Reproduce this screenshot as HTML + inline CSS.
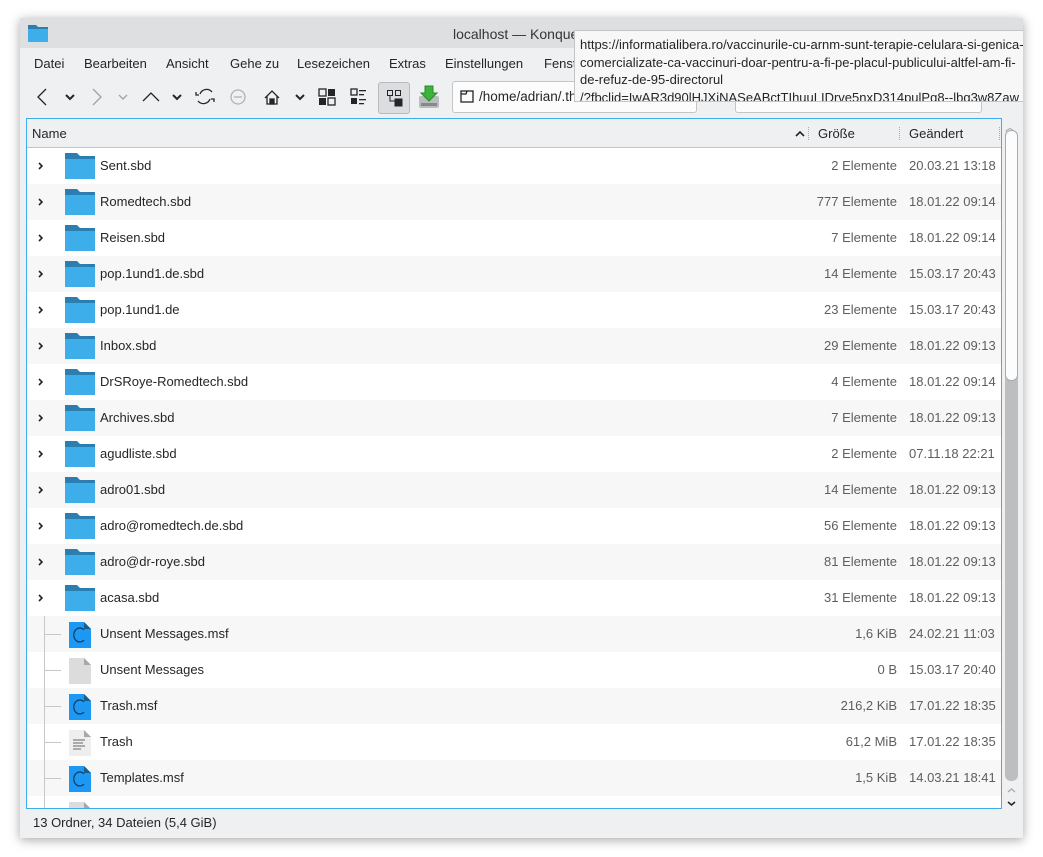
<!DOCTYPE html>
<html><head><meta charset="utf-8">
<style>
*{margin:0;padding:0;box-sizing:border-box}
body{width:1043px;height:857px;background:#fff;font-family:"Liberation Sans",sans-serif;font-size:13px;color:#232627;position:relative;overflow:hidden}
.win{position:absolute;left:20px;top:18px;width:1003px;height:820px;background:#eff0f1;box-shadow:0 2px 10px rgba(0,0,0,.35)}
.title{position:absolute;left:0;top:0;width:100%;height:30px;background:#dedfe0}
.a{position:absolute;white-space:nowrap}
.menu span{position:absolute;top:38px;font-size:13px}
.view{position:absolute;left:6px;top:100px;width:976px;height:691px;border:1px solid #3daee9;background:#fff;overflow:hidden}
.hdr{position:absolute;left:0;top:0;width:100%;height:29px;background:#eff0f1;border-bottom:1px solid #c4c5c6}
.row{position:absolute;left:0;width:974px;height:36px}
.row.g{background:#f7f7f7}
.nm{position:absolute;left:73px;top:10px}
.sz{position:absolute;right:104px;top:10px;color:#5c5e60;text-align:right}
.dt{position:absolute;left:882px;top:10px;color:#5c5e60}
.fold{position:absolute;left:38px;top:5px;width:30px;height:26px}
.tip{position:absolute;left:574px;top:30px;width:449px;height:72px;background:#f7f7f7;border:1px solid #c4c5c6;border-right:none;font-size:13px;line-height:17.5px;padding:5px 0 0 5px;overflow:hidden;white-space:nowrap}
</style></head><body>
<div class="win">
 <div class="title">
  <svg class="a" style="left:8px;top:7px" width="20" height="17"><path d="M0 0h8l2 2h10v15H0z" fill="#2a7fb0"/><rect x="0" y="4" width="20" height="13" fill="#3daee9"/></svg>
  <div class="a" style="left:433px;top:8px;font-size:14px;color:#31363b">localhost — Konqueror</div>
 </div>
 <div class="menu">
  <span style="left:14px">Datei</span><span style="left:64px">Bearbeiten</span><span style="left:146px">Ansicht</span><span style="left:210px">Gehe zu</span><span style="left:277px">Lesezeichen</span><span style="left:369px">Extras</span><span style="left:425px">Einstellungen</span><span style="left:524px">Fenster</span>
 </div>
 <svg class="a" style="left:0;top:62px" width="440" height="34" fill="none" stroke="#232627" stroke-width="1.3">
  <path d="M26 9l-8 8 8 8"/><path d="M46 15l4 4 4-4" stroke-width="2"/>
  <path d="M73 9l8 8-8 8" stroke="#a0a2a4"/><path d="M99 15l4 4 4-4" stroke="#a0a2a4"/>
  <path d="M123 21l8-8 8 8"/><path d="M153 15l4 4 4-4" stroke-width="2"/>
  <path d="M192 12a7 7 0 0 0-12 2M178 21a7 7 0 0 0 12-2"/><path d="M176 12v3h3M194 22v-3h-3"/>
  <circle cx="218" cy="17" r="7" stroke="#b0b2b4"/><path d="M214 17h8" stroke="#b0b2b4"/>
  <path d="M245 18l7-7 7 7M247 16v8h10v-8"/><rect x="250" y="19" width="4" height="5" fill="#232627"/>
  <path d="M276 15l4 4 4-4" stroke-width="2"/>
  <g stroke="none" fill="#232627"><rect x="299" y="9" width="7" height="7" fill="none" stroke="#232627"/><rect x="308" y="9" width="7" height="7"/><rect x="299" y="18" width="7" height="7"/><rect x="308" y="18" width="7" height="7" fill="none" stroke="#232627"/>
  <rect x="331" y="9" width="6" height="6" fill="none" stroke="#232627"/><rect x="331" y="18" width="6" height="6"/><rect x="339" y="10" width="7" height="1.3"/><rect x="339" y="14" width="5" height="1.3"/><rect x="339" y="19" width="7" height="1.3"/><rect x="339" y="23" width="5" height="1.3"/></g>
 </svg>
 <div class="a" style="left:358px;top:64px;width:32px;height:32px;background:#dcdde0;border:1px solid #b8babc;border-radius:3px"></div>
 <svg class="a" style="left:366px;top:71px" width="18" height="18" fill="none" stroke="#232627"><rect x="1.5" y="1.5" width="5" height="5"/><rect x="9.5" y="1.5" width="5" height="5"/><path d="M4 7v5h5"/><rect x="9" y="10" width="7" height="7" fill="#232627"/></svg>
 <svg class="a" style="left:398px;top:66px" width="22" height="26"><rect x="1" y="12" width="20" height="12" rx="2" fill="#b8bcbc"/><rect x="3" y="19" width="16" height="3" fill="#888"/><path d="M7 2h8v7h4l-8 8-8-8h4z" fill="#3cb43c" stroke="#2a8a2a"/></svg>
 <div class="a" style="left:432px;top:63px;width:245px;height:32px;background:#fcfcfc;border:1px solid #c4c5c6;border-radius:3px"></div>
 <svg class="a" style="left:440px;top:72px" width="14" height="13" fill="none" stroke="#232627" stroke-width="1.3"><rect x="1" y="1" width="12" height="11"/><path d="M1 4h5l1-3"/></svg>
 <div class="a" style="left:459px;top:71px;font-size:13.5px">/home/adrian/.thunderbird</div>
 <div class="a" style="left:715px;top:63px;width:247px;height:32px;background:#fcfcfc;border:1px solid #c4c5c6;border-radius:3px"></div>

 <div class="view">
  <div class="hdr">
   <div class="a" style="left:5px;top:7px">Name</div>
   <svg class="a" style="left:768px;top:11px" width="10" height="8"><path d="M1 6l4-4 4 4" fill="none" stroke="#232627" stroke-width="1.6"/></svg>
   <div class="a" style="left:781px;top:8px;width:1px;height:13px;border-left:1px dotted #aaa"></div>
   <div class="a" style="left:791px;top:7px">Größe</div>
   <div class="a" style="left:872px;top:8px;width:1px;height:13px;border-left:1px dotted #aaa"></div>
   <div class="a" style="left:882px;top:7px">Geändert</div>
   <div class="a" style="left:972px;top:8px;width:1px;height:13px;border-left:1px dotted #aaa"></div>
  </div>
  <div id="rows"></div>
 </div>
 <div class="a" style="left:985px;top:101px;font-size:10px;color:#888">︿</div>
 <div class="a" style="left:985px;top:112px;width:13px;height:651px;background:#bcbec0;border-radius:6px"></div>
 <div class="a" style="left:985px;top:112px;width:13px;height:251px;background:#fcfcfc;border:1px solid #a8aaac;border-radius:6px"></div>
 <svg class="a" style="left:985px;top:765px" width="13" height="26" fill="none" stroke-width="1.3"><path d="M3 9l3.5-3 3.5 3" stroke="#aaa"/><path d="M3 19l3.5 3 3.5-3" stroke="#232627" stroke-width="1.6"/></svg>
 <div class="a" style="left:13px;top:797px">13 Ordner, 34 Dateien (5,4 GiB)</div>
</div>
<div class="tip">https://informatialibera.ro/vaccinurile-cu-arnm-sunt-terapie-celulara-si-genica-comercializate<br>comercializate-ca-vaccinuri-doar-pentru-a-fi-pe-placul-publicului-altfel-am-fi-<br>de-refuz-de-95-directorul<br>/?fbclid=IwAR3d90lHJXjNASeABctTIhuuLIDrve5nxD314pulPg8--lbg3w8Zaw</div>
<script>
var d=[["Sent.sbd","2 Elemente","20.03.21 13:18","f"],["Romedtech.sbd","777 Elemente","18.01.22 09:14","f"],["Reisen.sbd","7 Elemente","18.01.22 09:14","f"],["pop.1und1.de.sbd","14 Elemente","15.03.17 20:43","f"],["pop.1und1.de","23 Elemente","15.03.17 20:43","f"],["Inbox.sbd","29 Elemente","18.01.22 09:13","f"],["DrSRoye-Romedtech.sbd","4 Elemente","18.01.22 09:14","f"],["Archives.sbd","7 Elemente","18.01.22 09:13","f"],["agudliste.sbd","2 Elemente","07.11.18 22:21","f"],["adro01.sbd","14 Elemente","18.01.22 09:13","f"],["adro@romedtech.de.sbd","56 Elemente","18.01.22 09:13","f"],["adro@dr-roye.sbd","81 Elemente","18.01.22 09:13","f"],["acasa.sbd","31 Elemente","18.01.22 09:13","f"],["Unsent Messages.msf","1,6 KiB","24.02.21 11:03","c"],["Unsent Messages","0 B","15.03.17 20:40","e"],["Trash.msf","216,2 KiB","17.01.22 18:35","c"],["Trash","61,2 MiB","17.01.22 18:35","t"],["Templates.msf","1,5 KiB","14.03.21 18:41","c"],["","","","e"]];
var h="";
d.forEach(function(r,i){
 var top=29+i*36,ic;
 if(r[3]=="f")ic='<svg class="fold" viewBox="0 0 30 26"><path d="M0 0h12l3 3h15v23H0z" fill="#2a7fb0"/><rect x="0" y="6" width="30" height="20" fill="#3daee9"/></svg><svg class="a" style="left:10px;top:13px" width="8" height="10"><path d="M2 2l3 3-3 3" fill="none" stroke="#232627" stroke-width="1.6"/></svg>';
 else{var fill=r[3]=="c"?"#1d99f3":"#dcdcdc",corner=r[3]=="c"?"#1a5c8a":"#a8a8a8";
  ic='<div class="a" style="left:17px;top:0;width:1px;height:36px;background:#c8c8c8"></div><div class="a" style="left:18px;top:18px;width:16px;height:1px;background:#c8c8c8"></div><svg class="a" style="left:42px;top:6px" width="22" height="26"><path d="M0 0h15l7 7v19H0z" fill="'+fill+'"/><path d="M15 0l7 7h-7z" fill="'+corner+'"/>'+(r[3]=="c"?'<path d="M15 8a6 7 0 1 0 0 10" fill="none" stroke="#0b3d66" stroke-width="1.2"/>':'')+(r[3]=="t"?'<path d="M4 10h12M4 13h10M4 16h12M4 19h8" stroke="#666"/>':'')+'</svg>';
  if(r[3]=="t")ic=ic.replace('fill="#dcdcdc"','fill="#eeeeee"');}
 h+='<div class="row'+(i%2?" g":"")+'" style="top:'+top+'px">'+ic+'<div class="nm">'+r[0]+'</div><div class="sz">'+r[1]+'</div><div class="dt">'+r[2]+'</div></div>';
});
document.getElementById("rows").innerHTML=h;
</script>
</body></html>
